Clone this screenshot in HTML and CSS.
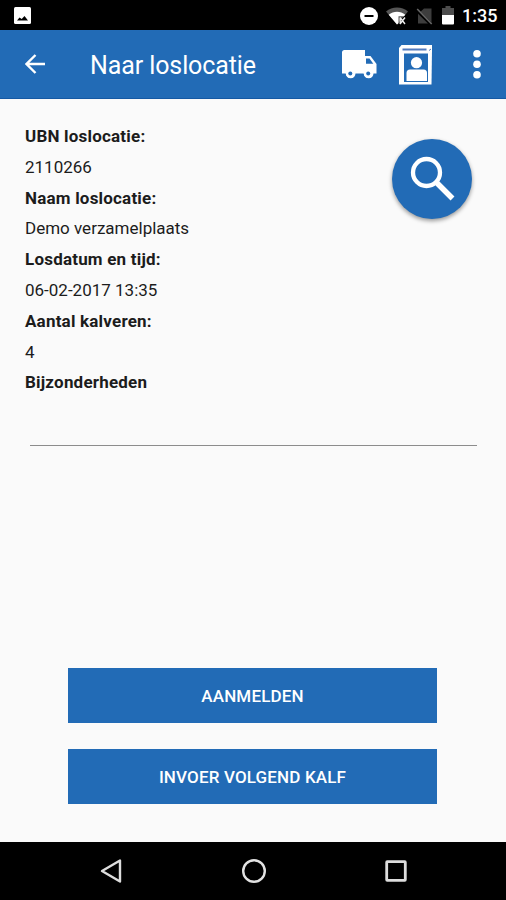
FILE: index.html
```html
<!DOCTYPE html>
<html lang="nl">
<head>
    <meta charset="UTF-8">
    <meta name="viewport" content="width=device-width, initial-scale=1.0">
    <title>Naar loslocatie</title>
    <link rel="stylesheet" href="styles.css">
</head>
<body>
    <div class="statusbar">
        <svg class="icon-picture" width="17" height="17" viewBox="0 0 17 17">
            <rect width="17" height="17" rx="1.5" fill="#fff"/>
            <path d="M3 13.500l2.500-3 2.200 1.500L10.500 9l3.500 4.500z" fill="#000"/>
        </svg>
        <div class="status-right">
            <svg width="18" height="18" viewBox="0 0 18 18">
                <circle cx="9" cy="9" r="9" fill="#fff"/>
                <path d="M4.500 9h9" stroke="#000" stroke-width="2"/>
            </svg>
            <svg class="icon-wifi" width="23" height="18" viewBox="0 0 23 18">
                <path d="M0 4.500C6-.8 16-.8 22 4.500L11 17.500z" fill="#555"/>
                <path d="M2.700 7.700C7.500 3.600 14.500 3.600 19.300 7.700L18 9.200H12.500v7L11 17.500z" fill="#fff"/>
                <path d="M14 10.500l5 6.500M19 10.500l-5 6.500M14.200 10.500v6.500" fill="none" stroke="#eee" stroke-width="1.400"/>
            </svg>
            <svg class="icon-sim" width="17" height="18" viewBox="0 0 17 18">
                <path d="M8 1.500h7.500v14L4.500 4.800zM2 6.800v9.700h10z" fill="#3d3d3d"/>
                <path d="M1.200 2l14.500 15" stroke="#666" stroke-width="1.600"/>
            </svg>
            <svg class="icon-battery" width="12" height="19" viewBox="0 0 12 19">
                <path d="M3.500 0h5v2H12v7H0V2h3.500z" fill="#4d4d4d"/>
                <path d="M0 9h12v8.500a1 1 0 0 1-1 1H1a1 1 0 0 1-1-1z" fill="#fff"/>
            </svg>
            <span class="clock">1:35</span>
        </div>
    </div>

    <header class="appbar">
        <svg class="icon-back" width="20" height="20" viewBox="0 0 20 20">
            <path d="M10.500 1L1.500 10l9 9M1.500 10H20" fill="none" stroke="#fff" stroke-width="2.400"/>
        </svg>
        <h1>Naar loslocatie</h1>
        <svg class="icon-truck" width="35" height="29" viewBox="0 0 35 29">
            <path d="M2.500 0H23v6h5.500L34.500 14V23.500h-3a4.800 4.800 0 0 1-9.600 0H13.500a4.800 4.800 0 0 1-9.600 0H0V2.500A2.500 2.500 0 0 1 2.500 0z" fill="#fff"/>
            <path d="M24 8.500h3.500l3.800 5.200H24z" fill="#226bb6"/>
            <circle cx="8.300" cy="23.500" r="4.500" fill="#fff"/>
            <circle cx="8.300" cy="23.500" r="2" fill="#226bb6"/>
            <circle cx="26.200" cy="23.500" r="4.500" fill="#fff"/>
            <circle cx="26.200" cy="23.500" r="2" fill="#226bb6"/>
        </svg>
        <svg class="icon-contact" width="34" height="40" viewBox="0 0 34 40">
            <path d="M2.500 0h30.500v5l-.5 34.500H0V3z" fill="#fff"/>
            <path d="M3.500 4.500h24" stroke="#5079bc" stroke-width="2"/>
            <path d="M30 5.500l2-1.500" stroke="#5079bc" stroke-width="1"/>
            <rect x="5" y="8.500" width="24" height="28.500" fill="#226bb6"/>
            <circle cx="17.500" cy="17.700" r="5.600" fill="#fff"/>
            <path d="M7.500 36v-8a3.500 3.500 0 0 1 3.500-3.500h13.500a3.500 3.500 0 0 1 3.500 3.500v8z" fill="#fff"/>
        </svg>
        <svg class="icon-more" width="8" height="30" viewBox="0 0 8 30">
            <circle cx="4" cy="4.700" r="3.800" fill="#fff"/>
            <circle cx="4" cy="15.200" r="3.800" fill="#fff"/>
            <circle cx="4" cy="25.700" r="3.800" fill="#fff"/>
        </svg>
    </header>

    <main class="content">
        <div class="details">
            <dl class="info">
                <dt>UBN loslocatie:</dt>
                <dd>2110266</dd>
                <dt>Naam loslocatie:</dt>
                <dd>Demo verzamelplaats</dd>
                <dt>Losdatum en tijd:</dt>
                <dd>06-02-2017 13:35</dd>
                <dt>Aantal kalveren:</dt>
                <dd>4</dd>
                <dt>Bijzonderheden</dt>
            </dl>
            <button class="search" aria-label="Zoeken">
                <svg width="80" height="80" viewBox="0 0 80 80">
                    <circle cx="34.500" cy="33.500" r="13.500" fill="none" stroke="#fff" stroke-width="4.300"/>
                    <path d="M44.500 43.500l16 16" stroke="#fff" stroke-width="5.500"/>
                </svg>
            </button>
        </div>
        <div class="remarks"></div>
        <div class="actions">
            <button class="action">AANMELDEN</button>
            <button class="action">INVOER VOLGEND KALF</button>
        </div>
    </main>

    <nav class="navbar">
        <svg width="24" height="26" viewBox="0 0 24 26">
            <path d="M21 2.500v21L3 13z" fill="none" stroke="#ddd" stroke-width="2.400" stroke-linejoin="round"/>
        </svg>
        <svg width="26" height="26" viewBox="0 0 26 26">
            <circle cx="13" cy="13" r="10.800" fill="none" stroke="#e2e2e2" stroke-width="2.400"/>
        </svg>
        <svg width="24" height="26" viewBox="0 0 24 26">
            <rect x="2.700" y="3.700" width="18.600" height="18.600" rx="0.500" fill="none" stroke="#ddd" stroke-width="2.800"/>
        </svg>
    </nav>
</body>
</html>
```

FILE: styles.css
```css
* {
    box-sizing: border-box;
}

body {
    margin: 0;
    height: 900px;
    display: flex;
    flex-direction: column;
    background: #fafafa;
    color: #1c1c1c;
    font-family: Roboto, "Liberation Sans", sans-serif;
    overflow: hidden;
}

svg {
    display: block;
    flex-shrink: 0;
}

button {
    border: none;
    padding: 0;
    font-family: inherit;
    cursor: pointer;
}

/* statusbalk */
.statusbar {
    height: 30px;
    padding: 1px 10px 0 14px;
    display: flex;
    align-items: center;
    justify-content: space-between;
    background: #000;
    color: #fff;
}

.status-right {
    display: flex;
    align-items: center;
}

.icon-wifi {
    margin-left: 8px;
}

.icon-sim {
    margin-left: 7px;
}

.icon-battery {
    margin-left: 9px;
}

.clock {
    width: 34px;
    margin-left: 8px;
    font-size: 18px;
    font-weight: 500;
    line-height: 20px;
}

/* titelbalk */
.appbar {
    height: 69px;
    padding: 0 25px;
    display: flex;
    align-items: center;
    background: #226bb6;
    border-bottom: 1px solid #1559a4;
    color: #fff;
}

.appbar h1 {
    flex: 1;
    margin: 4px 0 0 45px;
    font-size: 25px;
    font-weight: 400;
    line-height: 30px;
    letter-spacing: -0.1px;
}

.icon-contact {
    margin: 1px 0 0 22px;
}

.icon-more {
    margin-left: 40px;
}

/* inhoud */
.content {
    flex: 1;
    padding: 22px 29px 0 25px;
    display: flex;
    flex-direction: column;
}

.details {
    display: flex;
    justify-content: space-between;
    align-items: flex-start;
}

.info {
    margin: 0;
    font-size: 17px;
    line-height: 30.8px;
}

.info dt {
    font-weight: 700;
    letter-spacing: 0.2px;
}

.info dd {
    margin: 0;
}

.search {
    width: 80px;
    height: 80px;
    margin: 18px 5px 0 0;
    border-radius: 50%;
    background: #226bb6;
    box-shadow: 0 2px 4px rgba(0, 0, 0, 0.4);
}

.remarks {
    height: 48px;
    margin-left: 5px;
    border-bottom: 1px solid #8c8c8c;
}

.actions {
    margin: 222px 40px 0 43px;
    display: flex;
    flex-direction: column;
    gap: 26px;
}

.action {
    height: 55px;
    background: #226bb6;
    color: #fff;
    font-size: 17px;
    font-weight: 500;
    letter-spacing: 0.15px;
}

/* navigatiebalk */
.navbar {
    height: 58px;
    padding: 0 98px 0 99px;
    display: flex;
    align-items: center;
    justify-content: space-between;
    background: #000;
}
```
